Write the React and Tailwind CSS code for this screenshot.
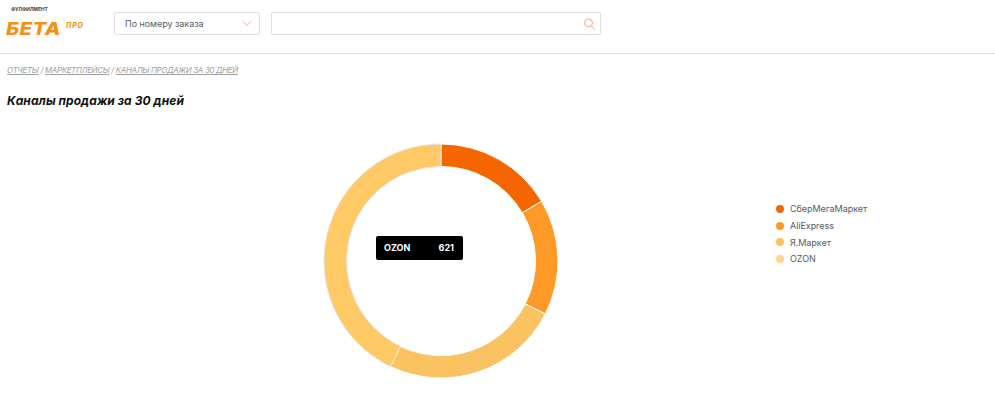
const font = { fontFamily: 'Inter, "Liberation Sans", sans-serif' };

// Сегменты кольца: углы в градусах от верхней точки
const segments = [
  { name: 'СберМегаМаркет', from: 0, to: 59.3, color: '#f56600', dot: '#f56600' },
  { name: 'AliExpress', from: 59.3, to: 117, color: '#ff9a28', dot: '#ff9a28' },
  { name: 'Я.Маркет', from: 117, to: 205.5, color: '#fbc262', dot: '#fdc062' },
  { name: 'OZON', from: 205.5, to: 360, color: '#ffc966', dot: '#fdd68a' },
];

function polar(r, deg) {
  const a = (deg * Math.PI) / 180;
  return `${(118 + r * Math.sin(a)).toFixed(2)} ${(118 - r * Math.cos(a)).toFixed(2)}`;
}

function arcPath(from, to) {
  const outer = 117;
  const inner = 94.5;
  const end = to === 360 ? 359.99 : to;
  const large = end - from > 180 ? 1 : 0;
  return `M${polar(outer, from)} A${outer} ${outer} 0 ${large} 1 ${polar(outer, end)} L${polar(inner, end)} A${inner} ${inner} 0 ${large} 0 ${polar(inner, from)} Z`;
}

function Donut() {
  return (
    <svg width="236" height="236" viewBox="0 0 236 236" className="block">
      {segments.map((s) => (
        <path
          key={s.name}
          d={arcPath(s.from, s.to)}
          fill={s.color}
          stroke={s.name === 'OZON' ? '#e4e4e4' : '#ffffff'}
          strokeWidth="1"
        />
      ))}
    </svg>
  );
}

function Logo() {
  return (
    <div className="w-[92px] shrink-0 pt-[6px] pl-[6px]">
      <div className="pl-[5px] text-[5px] leading-[7px] font-bold tracking-[-0.1px] text-[#444444] whitespace-nowrap">ФУЛФИЛМЕНТ</div>
      <div className="flex items-start mt-[7px]">
        <span className="w-[60px] text-[18px] leading-[17px] font-extrabold italic tracking-[0.3px] text-[#f79010] origin-left scale-x-[1.13]">
          БЕТА
        </span>
        <span className="mt-[1px] text-[7px] leading-[10px] font-extrabold italic tracking-[0.9px] text-[#f79010]">ПРО</span>
      </div>
    </div>
  );
}

export default function App() {
  return (
    <div className="h-[401px] overflow-hidden bg-white text-[#444b5a]" style={font}>
      {/* Шапка */}
      <header className="h-[54px] flex items-start border-b border-[#e2e2e2]">
        <Logo />
        <div className="mt-[12px] ml-[22px] w-[146px] h-[23px] flex items-center justify-between pl-[10px] pr-[7px] border border-[#e0e0e0] rounded-[2px]">
          <span className="text-[9px] tracking-[-0.05px] text-[#555b68]">По номеру заказа</span>
          <svg width="10" height="7" viewBox="0 0 10 7" fill="none" stroke="#f9a98f" strokeWidth="1">
            <path d="M1 1.2 5 5.5 9 1.2" />
          </svg>
        </div>
        <div className="mt-[12px] ml-[11px] w-[330px] h-[23px] flex items-center justify-end pr-[4px] border border-[#e0e0e0] rounded-[2px]">
          <svg width="13" height="14" viewBox="0 0 13 14" fill="none" strokeWidth="1">
            <circle cx="5.5" cy="6" r="4" stroke="#f9a878" />
            <path d="M8.5 9 12 13" stroke="#f4a0a8" />
          </svg>
        </div>
      </header>

      <main className="px-[7px]">
        {/* Хлебные крошки */}
        <nav className="mt-[11px] text-[8px] leading-[11px] italic tracking-[-0.36px] text-[#a0a0a0] whitespace-nowrap">
          <a className="underline">ОТЧЕТЫ</a> / <a className="underline">МАРКЕТПЛЕЙСЫ</a> / <a className="underline">КАНАЛЫ ПРОДАЖИ ЗА 30 ДНЕЙ</a>
        </nav>

        <h1 className="mt-[17px] text-[12px] leading-[15px] font-bold italic tracking-[0.08px] text-[#111111]">Каналы продажи за 30 дней</h1>

        <div className="mt-[35px] flex">
          {/* Диаграмма */}
          <div className="relative ml-[316px] w-[236px] h-[236px]">
            <Donut />
            <div className="absolute left-[53px] top-[93px] w-[87px] h-[24px] flex items-center justify-between pl-[8px] pr-[9px] bg-black rounded-[2px] text-white text-[9px] font-bold">
              <span>OZON</span>
              <span>621</span>
            </div>
          </div>

          {/* Легенда */}
          <ul className="ml-[217px] mt-[60px] flex flex-col gap-[4.7px]">
            {segments.map((s) => (
              <li key={s.name} className="flex items-center h-[12px] text-[9px] tracking-[-0.05px] text-[#555b68]">
                <span className="w-[8px] h-[8px] rounded-full mr-[6px]" style={{ backgroundColor: s.dot }} />
                {s.name}
              </li>
            ))}
          </ul>
        </div>
      </main>
    </div>
  );
}
